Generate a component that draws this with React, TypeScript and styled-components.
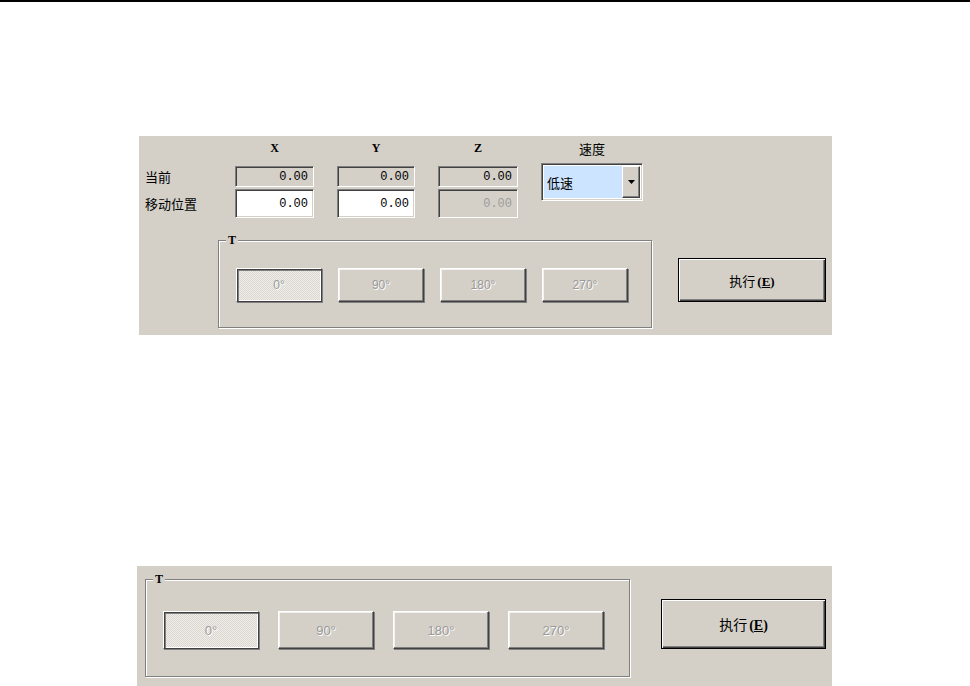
import React from 'react';
import styled, { createGlobalStyle } from 'styled-components';

const GlobalStyle = createGlobalStyle`
  html, body {
    margin: 0;
    padding: 0;
    background: #ffffff;
  }
  body {
    font-family: "Noto Sans CJK SC", "Liberation Sans", sans-serif;
    font-size: 13px;
    color: #000;
  }
`;

type Size = 'normal' | 'large';

const SIZES = {
  normal: {
    group: { w: 434, h: 88, padTop: 27, padLeft: 17, gap: 16 },
    button: { w: 86, h: 34, font: 12 },
    exec: { w: 148, h: 44, top: 18, gapBefore: 26, font: 13 },
  },
  large: {
    group: { w: 485, h: 98, padTop: 31, padLeft: 17, gap: 19 },
    button: { w: 96, h: 38, font: 13 },
    exec: { w: 165, h: 50, top: 20, gapBefore: 31, font: 14 },
  },
};

const Page = styled.div`
  width: 970px;
  height: 686px;
  overflow: hidden;
  box-sizing: border-box;
  border-top: 2px solid #000;
`;

const Panel = styled.section<{ $left: number; $top: number; $width: number; $height: number }>`
  box-sizing: border-box;
  margin: ${({ $top }) => $top}px 0 0 ${({ $left }) => $left}px;
  width: ${({ $width }) => $width}px;
  height: ${({ $height }) => $height}px;
  background: #d4d0c8;
`;

const FieldGrid = styled.div`
  display: grid;
  grid-template-columns: 67px 79px 78px 80px 102px;
  grid-template-rows: 23px 21px 29px;
  column-gap: 23px;
  row-gap: 2px;
  padding: 5px 0 0 6px;
`;

const ColHead = styled.div<{ $col: number }>`
  grid-column: ${({ $col }) => $col};
  grid-row: 1;
  align-self: start;
  line-height: 15px;
  text-align: center;
  font-family: "Liberation Serif", serif;
  font-weight: bold;
  font-size: 12px;
`;

const RowLabel = styled.div<{ $row: number }>`
  grid-column: 1;
  grid-row: ${({ $row }) => $row};
  align-self: center;
  font-size: 13px;
  line-height: 16px;
  white-space: nowrap;
`;

const NumField = styled.div<{ $row: number; $col: number; $variant: 'readonly' | 'edit' | 'disabled' }>`
  grid-row: ${({ $row }) => $row};
  grid-column: ${({ $col }) => $col};
  box-sizing: border-box;
  display: flex;
  align-items: center;
  justify-content: flex-end;
  padding-right: 5px;
  font-family: "Liberation Mono", monospace;
  font-size: 12px;
  background: ${({ $variant }) => ($variant === 'edit' ? '#ffffff' : '#d4d0c8')};
  color: ${({ $variant }) => ($variant === 'disabled' ? '#9c9c9c' : '#000')};
  border: 1px solid;
  border-color: #808080 #ffffff #ffffff #808080;
  box-shadow: inset 1px 1px 0 #404040, inset -1px -1px 0 #d4d0c8;
`;

const SpeedCol = styled.div`
  grid-column: 5;
  grid-row: 1 / span 3;
  display: flex;
  flex-direction: column;
`;

const SpeedHead = styled.div`
  line-height: 15px;
  text-align: center;
  font-size: 13px;
`;

const Combo = styled.div`
  box-sizing: border-box;
  margin-top: 7px;
  height: 38px;
  display: flex;
  padding: 1px;
  background: #ffffff;
  border: 1px solid;
  border-color: #808080 #ffffff #ffffff #808080;
  box-shadow: inset 1px 1px 0 #404040, inset -1px -1px 0 #d4d0c8;
`;

const ComboValue = styled.div`
  flex: 1;
  margin: 1px 0 1px 1px;
  padding-left: 3px;
  display: flex;
  align-items: center;
  background: #cce4ff;
  font-size: 13px;
`;

const ComboArrow = styled.div`
  box-sizing: border-box;
  width: 18px;
  margin: 1px 1px 1px 0;
  display: flex;
  align-items: center;
  justify-content: center;
  background: #d4d0c8;
  border: 1px solid;
  border-color: #ffffff #404040 #404040 #ffffff;
  box-shadow: inset -1px -1px 0 #808080;
`;

const ActionRow = styled.div<{ $padLeft: number; $padTop: number; $gap: number }>`
  display: flex;
  align-items: flex-start;
  gap: ${({ $gap }) => $gap}px;
  padding: ${({ $padTop }) => $padTop}px 0 0 ${({ $padLeft }) => $padLeft}px;
`;

const GroupBox = styled.div<{ $size: Size }>`
  position: relative;
  box-sizing: border-box;
  width: ${({ $size }) => SIZES[$size].group.w}px;
  height: ${({ $size }) => SIZES[$size].group.h}px;
  border: 1px solid #808080;
  box-shadow: 1px 1px 0 #ffffff, inset 1px 1px 0 #ffffff;
  display: flex;
  align-items: flex-start;
  gap: ${({ $size }) => SIZES[$size].group.gap}px;
  padding: ${({ $size }) => SIZES[$size].group.padTop}px 0 0 ${({ $size }) => SIZES[$size].group.padLeft}px;
`;

const Legend = styled.span`
  position: absolute;
  top: -8px;
  left: 7px;
  padding: 0 2px;
  background: #d4d0c8;
  font-family: "Liberation Serif", serif;
  font-weight: bold;
  font-size: 12px;
  line-height: 14px;
`;

const DegreeButton = styled.button<{ $size: Size; $checked?: boolean }>`
  box-sizing: border-box;
  width: ${({ $size }) => SIZES[$size].button.w}px;
  height: ${({ $size }) => SIZES[$size].button.h}px;
  padding: 0;
  font-family: "Liberation Sans", sans-serif;
  font-size: ${({ $size }) => SIZES[$size].button.font}px;
  color: #9a9a9a;
  text-shadow: 1px 1px 0 #ffffff;
  border: 1px solid;
  border-color: #ffffff #404040 #404040 #ffffff;
  background-color: #d4d0c8;
  box-shadow: ${({ $checked }) =>
    $checked
      ? 'inset 1px 1px 0 #404040, inset 2px 2px 0 #808080, inset -1px -1px 0 #ffffff, 1px 1px 0 #808080'
      : 'inset -1px -1px 0 #808080, inset 1px 1px 0 #f4f3f0, 1px 1px 0 #808080'};
  background-image: ${({ $checked }) =>
    $checked ? 'repeating-conic-gradient(#eeede9 0 25%, #dad7d0 0 50%)' : 'none'};
  background-size: 2px 2px;
`;

const ExecButton = styled.button<{ $size: Size }>`
  box-sizing: border-box;
  margin-top: ${({ $size }) => SIZES[$size].exec.top}px;
  width: ${({ $size }) => SIZES[$size].exec.w}px;
  height: ${({ $size }) => SIZES[$size].exec.h}px;
  padding: 0;
  font-family: "Noto Sans CJK SC", "Liberation Sans", sans-serif;
  font-size: ${({ $size }) => SIZES[$size].exec.font}px;
  color: #000;
  background: #d4d0c8;
  border: 1px solid #000;
  box-shadow: inset 1px 1px 0 #ffffff, inset -1px -1px 0 #404040, inset -2px -2px 0 #808080;
`;

const Mnemonic = styled.span`
  margin-left: 2px;
  font-family: "Liberation Serif", serif;
  font-weight: bold;

  u {
    text-underline-offset: 1px;
  }
`;

const DownArrow = () => (
  <svg width="7" height="4" viewBox="0 0 7 4">
    <path d="M0 0h7L3.5 4z" fill="#000" />
  </svg>
);

const DEGREES = ['0°', '90°', '180°', '270°'];

const RotationRow: React.FC<{ size: Size }> = ({ size }) => (
  <>
    <GroupBox $size={size}>
      <Legend>T</Legend>
      {DEGREES.map((d, i) => (
        <DegreeButton key={d} $size={size} $checked={i === 0} disabled>
          {d}
        </DegreeButton>
      ))}
    </GroupBox>
    <ExecButton $size={size}>
      执行<Mnemonic>(<u>E</u>)</Mnemonic>
    </ExecButton>
  </>
);

const App: React.FC = () => (
  <Page>
    <GlobalStyle />
    <Panel $left={139} $top={134} $width={693} $height={199}>
      <FieldGrid>
        <ColHead $col={2}>X</ColHead>
        <ColHead $col={3}>Y</ColHead>
        <ColHead $col={4}>Z</ColHead>
        <SpeedCol>
          <SpeedHead>速度</SpeedHead>
          <Combo>
            <ComboValue>低速</ComboValue>
            <ComboArrow>
              <DownArrow />
            </ComboArrow>
          </Combo>
        </SpeedCol>

        <RowLabel $row={2}>当前</RowLabel>
        <NumField $row={2} $col={2} $variant="readonly">0.00</NumField>
        <NumField $row={2} $col={3} $variant="readonly">0.00</NumField>
        <NumField $row={2} $col={4} $variant="readonly">0.00</NumField>

        <RowLabel $row={3}>移动位置</RowLabel>
        <NumField $row={3} $col={2} $variant="edit">0.00</NumField>
        <NumField $row={3} $col={3} $variant="edit">0.00</NumField>
        <NumField $row={3} $col={4} $variant="disabled">0.00</NumField>
      </FieldGrid>
      <ActionRow $padLeft={79} $padTop={22} $gap={SIZES.normal.exec.gapBefore}>
        <RotationRow size="normal" />
      </ActionRow>
    </Panel>

    <Panel $left={137} $top={231} $width={695} $height={120}>
      <ActionRow $padLeft={8} $padTop={13} $gap={SIZES.large.exec.gapBefore}>
        <RotationRow size="large" />
      </ActionRow>
    </Panel>
  </Page>
);

export default App;
